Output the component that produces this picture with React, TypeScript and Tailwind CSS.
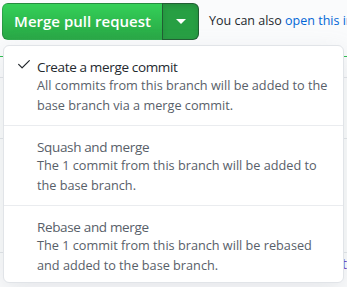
import React from "react";

interface MergeOption {
  title: string;
  lines: string[];
  selected?: boolean;
}

const options: MergeOption[] = [
  {
    title: "Create a merge commit",
    lines: ["All commits from this branch will be added to the", "base branch via a merge commit."],
    selected: true,
  },
  {
    title: "Squash and merge",
    lines: ["The 1 commit from this branch will be added to", "the base branch."],
  },
  {
    title: "Rebase and merge",
    lines: ["The 1 commit from this branch will be rebased", "and added to the base branch."],
  },
];

function CheckIcon() {
  return (
    <svg viewBox="0 0 16 16" width="16" height="16" className="absolute left-[12px] top-[10px] fill-[#24292e]">
      <path d="M13.78 4.22a.6.6 0 010 .85l-7.25 7.25a.6.6 0 01-.85 0L2.22 8.86a.6.6 0 01.85-.85L6.1 11.05l6.83-6.83a.6.6 0 01.85 0z" />
    </svg>
  );
}

function MenuItem({ option, last }: { option: MergeOption; last: boolean }) {
  return (
    <div
      className={`relative pl-[33px] pr-[12px] pt-[14px] ${
        last ? "pb-[7px]" : "pb-[10px] border-b border-[#eaecef]"
      }`}
    >
      {option.selected && <CheckIcon />}
      <div
        className={`text-[13.5px] leading-[15px] tracking-[-0.35px] ${
          option.selected ? "text-[#24292e]" : "text-[#586069]"
        }`}
      >
        {option.title}
      </div>
      <div className="text-[12.7px] leading-[20px] text-[#586069] whitespace-nowrap">
        {option.lines.map((line) => (
          <div key={line}>{line}</div>
        ))}
      </div>
    </div>
  );
}

export default function App() {
  return (
    <div className="relative h-[287px] w-[347px] overflow-hidden bg-[#fafbfc] font-['Open_Sans',sans-serif] text-[#24292e]">
      <div className="flex items-center pl-[2px] pt-[3px]">
        <div className="flex h-[37px]">
          <button className="flex w-[160px] items-center justify-center rounded-l-[6px] border border-r-0 border-[rgba(27,31,35,0.2)] bg-gradient-to-b from-[#34d058] to-[#28a745] text-[15px] font-semibold text-white">
            Merge pull request
          </button>
          <button className="flex w-[37px] items-center justify-center rounded-r-[6px] border border-[rgba(27,31,35,0.5)] bg-[#279f43] shadow-[inset_0_2px_5px_rgba(27,31,35,0.15)]">
            <svg width="10" height="5" viewBox="0 0 10 5" className="fill-white">
              <path d="M0 0h10L5 5z" />
            </svg>
          </button>
        </div>
        <span className="ml-[10px] whitespace-nowrap text-[12.5px]">
          You can also <span className="text-[#0366d6]">open this in GitHub Desktop</span>
        </span>
      </div>

      <div className="mt-[16px]">
        <div className="h-[1px] bg-[#2cbe4e]" />
        <div className="mt-[20px] h-[1px] bg-[#e1e4e8]" />
        <div className="mt-[60px] h-[1px] bg-[#e1e4e8]" />
        <div className="mt-[113px] h-[1px] bg-[#e1e4e8]" />
        <div className="flex justify-end text-[14px] text-[#6f42c1]">t</div>
      </div>

      <div className="absolute left-[3px] top-[45px] w-[341px] overflow-hidden rounded-[6px] border border-[#e1e4e8] bg-white shadow-[0_8px_24px_rgba(149,157,165,0.2)]">
        {options.map((option, i) => (
          <MenuItem key={option.title} option={option} last={i === options.length - 1} />
        ))}
      </div>
    </div>
  );
}
